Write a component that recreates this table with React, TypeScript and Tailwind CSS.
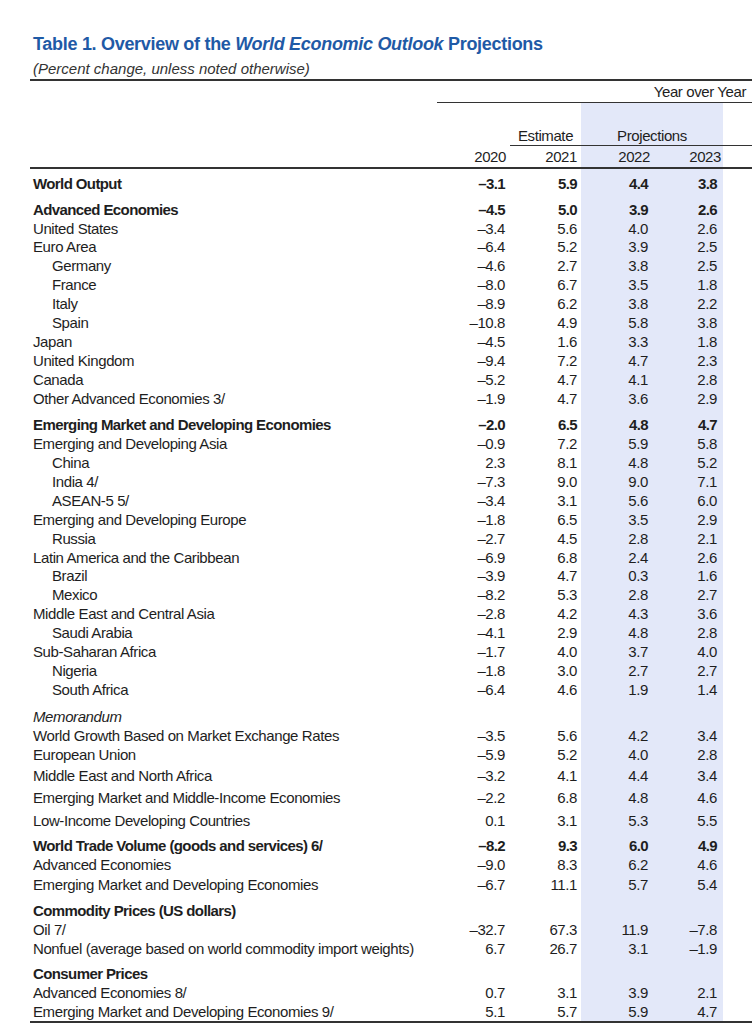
import React from "react";

type Row = {
  label: string;
  v?: string[];
  kind?: "bold" | "italic";
  indent?: boolean;
  h: string;
};

const rows: Row[] = [
  { label: "World Output", v: ["–3.1", "5.9", "4.4", "3.8"], kind: "bold", h: "h-[24px]" },
  { label: "Advanced Economies", v: ["–4.5", "5.0", "3.9", "2.6"], kind: "bold", h: "h-[26px]" },
  { label: "United States", v: ["–3.4", "5.6", "4.0", "2.6"], h: "h-[18px]" },
  { label: "Euro Area", v: ["–6.4", "5.2", "3.9", "2.5"], h: "h-[19px]" },
  { label: "Germany", v: ["–4.6", "2.7", "3.8", "2.5"], indent: true, h: "h-[19px]" },
  { label: "France", v: ["–8.0", "6.7", "3.5", "1.8"], indent: true, h: "h-[19px]" },
  { label: "Italy", v: ["–8.9", "6.2", "3.8", "2.2"], indent: true, h: "h-[19px]" },
  { label: "Spain", v: ["–10.8", "4.9", "5.8", "3.8"], indent: true, h: "h-[19px]" },
  { label: "Japan", v: ["–4.5", "1.6", "3.3", "1.8"], h: "h-[19px]" },
  { label: "United Kingdom", v: ["–9.4", "7.2", "4.7", "2.3"], h: "h-[19px]" },
  { label: "Canada", v: ["–5.2", "4.7", "4.1", "2.8"], h: "h-[19px]" },
  { label: "Other Advanced Economies 3/", v: ["–1.9", "4.7", "3.6", "2.9"], h: "h-[19px]" },
  { label: "Emerging Market and Developing Economies", v: ["–2.0", "6.5", "4.8", "4.7"], kind: "bold", h: "h-[26px]" },
  { label: "Emerging and Developing Asia", v: ["–0.9", "7.2", "5.9", "5.8"], h: "h-[19px]" },
  { label: "China", v: ["2.3", "8.1", "4.8", "5.2"], indent: true, h: "h-[19px]" },
  { label: "India 4/", v: ["–7.3", "9.0", "9.0", "7.1"], indent: true, h: "h-[19px]" },
  { label: "ASEAN-5 5/", v: ["–3.4", "3.1", "5.6", "6.0"], indent: true, h: "h-[19px]" },
  { label: "Emerging and Developing Europe", v: ["–1.8", "6.5", "3.5", "2.9"], h: "h-[19px]" },
  { label: "Russia", v: ["–2.7", "4.5", "2.8", "2.1"], indent: true, h: "h-[19px]" },
  { label: "Latin America and the Caribbean", v: ["–6.9", "6.8", "2.4", "2.6"], h: "h-[18px]" },
  { label: "Brazil", v: ["–3.9", "4.7", "0.3", "1.6"], indent: true, h: "h-[19px]" },
  { label: "Mexico", v: ["–8.2", "5.3", "2.8", "2.7"], indent: true, h: "h-[19px]" },
  { label: "Middle East and Central Asia", v: ["–2.8", "4.2", "4.3", "3.6"], h: "h-[19px]" },
  { label: "Saudi Arabia", v: ["–4.1", "2.9", "4.8", "2.8"], indent: true, h: "h-[19px]" },
  { label: "Sub-Saharan Africa", v: ["–1.7", "4.0", "3.7", "4.0"], h: "h-[19px]" },
  { label: "Nigeria", v: ["–1.8", "3.0", "2.7", "2.7"], indent: true, h: "h-[19px]" },
  { label: "South Africa", v: ["–6.4", "4.6", "1.9", "1.4"], indent: true, h: "h-[19px]" },
  { label: "Memorandum", kind: "italic", h: "h-[27px]" },
  { label: "World Growth Based on Market Exchange Rates", v: ["–3.5", "5.6", "4.2", "3.4"], h: "h-[18px]" },
  { label: "European Union", v: ["–5.9", "5.2", "4.0", "2.8"], h: "h-[20px]" },
  { label: "Middle East and North Africa", v: ["–3.2", "4.1", "4.4", "3.4"], h: "h-[21px]" },
  { label: "Emerging Market and Middle-Income Economies", v: ["–2.2", "6.8", "4.8", "4.6"], h: "h-[22px]" },
  { label: "Low-Income Developing Countries", v: ["0.1", "3.1", "5.3", "5.5"], h: "h-[23px]" },
  { label: "World Trade Volume (goods and services) 6/", v: ["–8.2", "9.3", "6.0", "4.9"], kind: "bold", h: "h-[25px]" },
  { label: "Advanced Economies", v: ["–9.0", "8.3", "6.2", "4.6"], h: "h-[19px]" },
  { label: "Emerging Market and Developing Economies", v: ["–6.7", "11.1", "5.7", "5.4"], h: "h-[20px]" },
  { label: "Commodity Prices (US dollars)", kind: "bold", h: "h-[26px]" },
  { label: "Oil 7/", v: ["–32.7", "67.3", "11.9", "–7.8"], h: "h-[19px]" },
  { label: "Nonfuel (average based on world commodity import weights)", v: ["6.7", "26.7", "3.1", "–1.9"], h: "h-[19px]" },
  { label: "Consumer Prices", kind: "bold", h: "h-[25px]" },
  { label: "Advanced Economies 8/", v: ["0.7", "3.1", "3.9", "2.1"], h: "h-[19px]" },
  { label: "Emerging Market and Developing Economies 9/", v: ["5.1", "5.7", "5.9", "4.7"], h: "h-[19px]" },
];

const grid = "grid grid-cols-[407px_73px_71px_71px_71px_29px]";
const shade = "bg-[#e3e8f9]";

function TableRow({ r }: { r: Row }) {
  const weight = r.kind === "bold" ? "font-bold tracking-[-0.6px]" : "";
  const v = r.v ?? ["", "", "", ""];
  return (
    <div className={`${grid} ${r.h} ${weight}`}>
      <div
        className={`flex items-end whitespace-nowrap ${r.indent ? "pl-[22px]" : "pl-[3px]"} ${
          r.kind === "italic" ? "italic" : ""
        }`}
      >
        {r.label}
      </div>
      <div className="flex items-end justify-end pr-[5px]">{v[0]}</div>
      <div className="flex items-end justify-end pr-[4px]">{v[1]}</div>
      <div className={`flex items-end justify-end pr-[4px] ${shade}`}>{v[2]}</div>
      <div className={`flex items-end justify-end pr-[6px] ${shade}`}>{v[3]}</div>
      <div />
    </div>
  );
}

export default function App() {
  return (
    <div className="min-h-screen bg-white pt-[32px] text-[#1e1e1e] font-['Liberation_Sans',Arial,sans-serif] overflow-hidden">
      <h1 className="pl-[33px] text-[18px] leading-[24px] font-bold tracking-[-0.3px] text-[#1f5aa6]">
        Table 1. Overview of the <span className="italic">World Economic Outlook</span> Projections
      </h1>
      <div className="pl-[33px] pt-[3px] h-[23px] text-[15px] leading-[20px] italic text-[#333]">
        (Percent change, unless noted otherwise)
      </div>

      <div className="ml-[30px] border-t-2 border-[#333] text-[15px] leading-[19px] tracking-[-0.4px]">
        {/* Header */}
        <div className={`${grid} h-[22px]`}>
          <div />
          <div className="col-span-5 flex items-center justify-end pr-[6px] border-b border-[#333]">
            Year over Year
          </div>
        </div>
        <div className={`${grid} h-[43px]`}>
          <div />
          <div />
          <div className="flex items-end justify-center border-b border-[#333]">Estimate</div>
          <div className={`col-span-2 flex items-end justify-center border-b border-[#333] ${shade}`}>
            Projections
          </div>
          <div className="border-b border-[#333]" />
        </div>
        <div className={`${grid} h-[23px] border-b-2 border-[#333]`}>
          <div />
          <div className="flex items-center justify-end pr-[4px]">2020</div>
          <div className="flex items-center justify-end pr-[4px]">2021</div>
          <div className={`flex items-center justify-end pr-[2px] ${shade}`}>2022</div>
          <div className={`flex items-center justify-end pr-[2px] ${shade}`}>2023</div>
          <div />
        </div>

        {/* Body */}
        <div className="border-b-2 border-[#333]">
          {rows.map((r, i) => (
            <TableRow key={i} r={r} />
          ))}
        </div>
      </div>
    </div>
  );
}
